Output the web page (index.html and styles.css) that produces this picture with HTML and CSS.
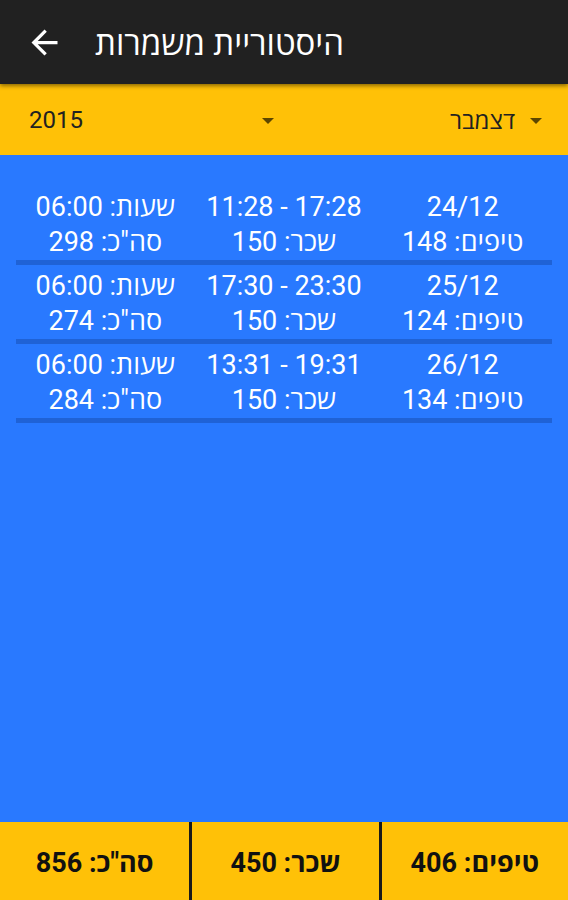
FILE: index.html
```html
<!DOCTYPE html>
<html lang="he">
  <head>
    <meta charset="UTF-8" />
    <meta name="viewport" content="width=device-width, initial-scale=1.0" />
    <title>היסטוריית משמרות</title>
    <link rel="stylesheet" href="styles.css">
  </head>
  <body>
    <div class="app">
      <div class="toolbar">
        <svg class="back" viewBox="0 0 24 24" width="39" height="39">
          <path d="M20 11H7.83l5.59-5.59L12 4l-8 8 8 8 1.41-1.41L7.83 13H20v-2z" fill="#fff" />
        </svg>
        <h1 class="title">היסטוריית משמרות</h1>
      </div>

      <div class="filters">
        <div class="spinner year">
          <span>2015</span>
          <span class="caret"></span>
        </div>
        <div class="spinner month">
          <span dir="rtl">דצמבר</span>
          <span class="caret"></span>
        </div>
      </div>

      <div class="list">
        <div class="shift">
          <div dir="rtl">שעות: 06:00</div>
          <div dir="ltr">11:28 - 17:28</div>
          <div>24/12</div>
          <div dir="rtl">סה"כ: 298</div>
          <div dir="rtl">שכר: 150</div>
          <div dir="rtl">טיפים: 148</div>
        </div>
        <div class="shift">
          <div dir="rtl">שעות: 06:00</div>
          <div dir="ltr">17:30 - 23:30</div>
          <div>25/12</div>
          <div dir="rtl">סה"כ: 274</div>
          <div dir="rtl">שכר: 150</div>
          <div dir="rtl">טיפים: 124</div>
        </div>
        <div class="shift">
          <div dir="rtl">שעות: 06:00</div>
          <div dir="ltr">13:31 - 19:31</div>
          <div>26/12</div>
          <div dir="rtl">סה"כ: 284</div>
          <div dir="rtl">שכר: 150</div>
          <div dir="rtl">טיפים: 134</div>
        </div>
      </div>

      <div class="totals">
        <div dir="rtl">סה"כ: 856</div>
        <div dir="rtl">שכר: 450</div>
        <div dir="rtl">טיפים: 406</div>
      </div>
    </div>
  </body>
</html>
```

FILE: styles.css
```css
body {
  margin: 0;
  font-family: Roboto, "Open Sans", "DejaVu Sans", sans-serif;
}
.app {
  width: 568px;
  height: 900px;
  display: flex;
  flex-direction: column;
  background: #2979ff;
}
.toolbar {
  position: relative;
  z-index: 1;
  height: 84px;
  flex: none;
  display: flex;
  align-items: center;
  background: #212121;
  box-shadow: 0 2px 4px rgba(0, 0, 0, 0.45);
  padding-left: 25px;
}
.back {
  display: block;
}
.title {
  margin: 0 0 0 31px;
  color: #fff;
  font-size: 33px;
  font-weight: 500;
}
.filters {
  height: 71px;
  flex: none;
  display: flex;
  background: #ffc107;
  color: #212121;
  font-size: 24px;
}
.spinner {
  box-sizing: border-box;
  width: 50%;
  display: flex;
  align-items: center;
}
.year {
  justify-content: space-between;
  padding: 0 10px 0 29px;
}
.month {
  justify-content: flex-end;
  gap: 15px;
  padding-right: 26px;
}
.caret {
  width: 0;
  height: 0;
  border-left: 6px solid transparent;
  border-right: 6px solid transparent;
  border-top: 6px solid #5c4600;
  margin-top: 2px;
}
.list {
  flex: 1;
  margin: 31px 16px 0;
}
.shift {
  display: grid;
  grid-template-columns: 1fr 1fr 1fr;
  padding-top: 4px;
  border-bottom: 5px solid #1f62d6;
  color: #fff;
  font-size: 27px;
  line-height: 35px;
  text-align: center;
}
.totals {
  height: 78px;
  flex: none;
  display: grid;
  grid-template-columns: 1fr 1fr 1fr;
  background: #ffc107;
  color: #111;
  font-size: 27px;
  font-weight: bold;
}
.totals div {
  display: flex;
  align-items: center;
  justify-content: center;
}
.totals div + div {
  border-left: 3px solid #1a1a1a;
}
```
